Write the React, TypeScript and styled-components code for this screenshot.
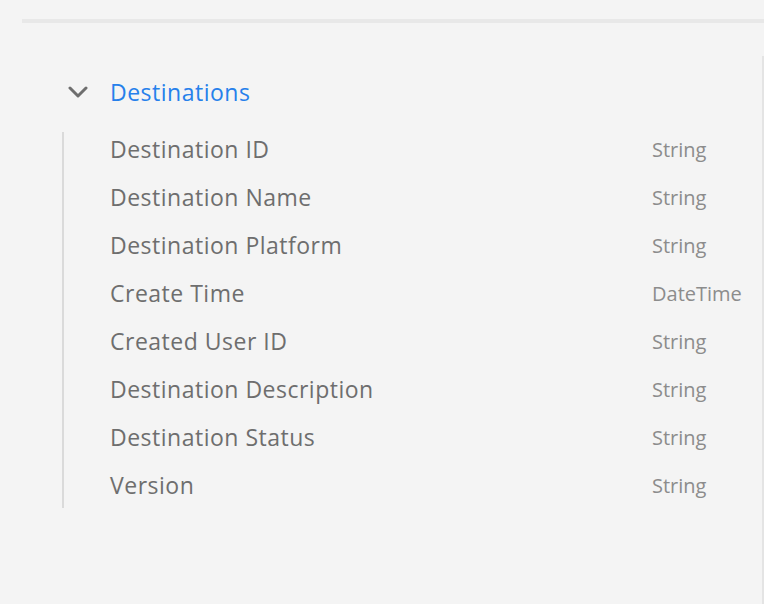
import React from "react";
import styled, { createGlobalStyle } from "styled-components";

const Global = createGlobalStyle`
  html, body { margin: 0; padding: 0; background: #f4f4f4; }
  body { font-family: "Open Sans", "Noto Sans", sans-serif; }
`;

const Page = styled.div`
  width: 764px;
  height: 604px;
  background: #f4f4f4;
  display: flex;
  flex-direction: column;
  overflow: hidden;
`;

const Divider = styled.div`
  margin: 19px 0 0 22px;
  height: 4px;
  background: #e8e8e8;
`;

const Panel = styled.div`
  flex: 1;
  margin-top: 33px;
  border-right: 2px solid #e4e4e4;
  padding-top: 16px;
  display: flex;
  flex-direction: column;
`;

const Header = styled.div`
  display: flex;
  align-items: center;
  height: 40px;
  padding-left: 68px;
  gap: 22px;
`;

const Title = styled.span`
  font-size: 23px;
  color: #2680eb;
  letter-spacing: 0.5px;
`;

const List = styled.div`
  margin: 20px 0 0 62px;
  border-left: 2px solid #dadada;
  padding-bottom: 6px;
  display: flex;
  flex-direction: column;
  gap: 14px;
`;

const Row = styled.div`
  display: flex;
  align-items: center;
  height: 34px;
  padding-left: 46px;
`;

const Name = styled.span`
  width: 542px;
  font-size: 23px;
  color: #6e6e6e;
  letter-spacing: 0.5px;
`;

const Type = styled.span`
  font-size: 20px;
  color: #8c8c8c;
`;

const Chevron = () => (
  <svg width="20" height="12" viewBox="0 0 20 12">
    <path d="M2 2 L10 10 L18 2" fill="none" stroke="#6e6e6e" strokeWidth="3" strokeLinecap="round" strokeLinejoin="round" />
  </svg>
);

const fields: [string, string][] = [
  ["Destination ID", "String"],
  ["Destination Name", "String"],
  ["Destination Platform", "String"],
  ["Create Time", "DateTime"],
  ["Created User ID", "String"],
  ["Destination Description", "String"],
  ["Destination Status", "String"],
  ["Version", "String"],
];

export default function App() {
  return (
    <Page>
      <Global />
      <Divider />
      <Panel>
        <Header>
          <Chevron />
          <Title>Destinations</Title>
        </Header>
        <List>
          {fields.map(([n, t]) => (
            <Row key={n}>
              <Name>{n}</Name>
              <Type>{t}</Type>
            </Row>
          ))}
        </List>
      </Panel>
    </Page>
  );
}
